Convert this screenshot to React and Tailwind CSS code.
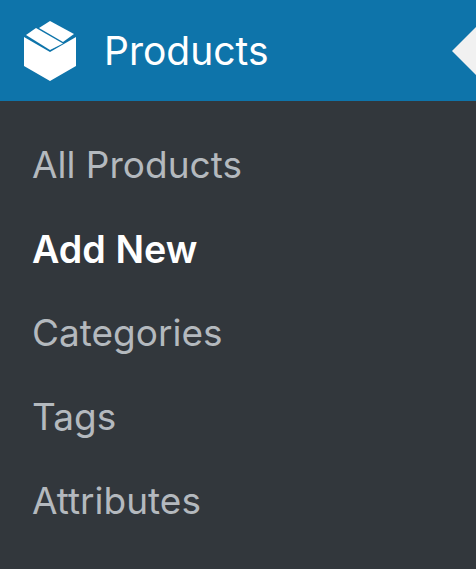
import React from "react";

const ITEMS = [
  { label: "All Products" },
  { label: "Add New", current: true },
  { label: "Categories" },
  { label: "Tags" },
  { label: "Attributes" },
];

function BoxIcon() {
  return (
    <svg width="52" height="60" viewBox="0 0 52 60" className="shrink-0 fill-white">
      {/* lid */}
      <path d="M26 0 L50 13 L39 21 L15 7 Z" />
      <path d="M2 14 L12 7 L39 22.5 L26 29 Z" />
      {/* body */}
      <path d="M0 16 L26 31 L52 16 V45 L26 60 L0 45 Z" />
    </svg>
  );
}

function MenuItem({ label, current }) {
  return (
    <a
      className={
        "block h-[84px] pl-[32px] leading-[84px] " +
        (current ? "text-[37.7px] font-semibold text-white" : "text-[37px] text-[#b4b9be]")
      }
    >
      {label}
    </a>
  );
}

export default function App() {
  return (
    <div className="h-[569px] w-[476px] overflow-hidden bg-[#32373c] font-['Inter',sans-serif]">
      {/* Header */}
      <div className="relative flex h-[101px] items-center bg-[#0e74aa] pl-[24px] pt-px">
        <BoxIcon />
        <span className="ml-[28px] text-[39px] text-white">Products</span>
        <div className="absolute left-[452px] top-[27px] h-0 w-0 border-y-[24px] border-r-[24px] border-y-transparent border-r-[#f1f1f1]" />
      </div>

      {/* Submenu */}
      <div className="pt-[22px]">
        {ITEMS.map((item) => (
          <MenuItem key={item.label} label={item.label} current={item.current} />
        ))}
      </div>
    </div>
  );
}
